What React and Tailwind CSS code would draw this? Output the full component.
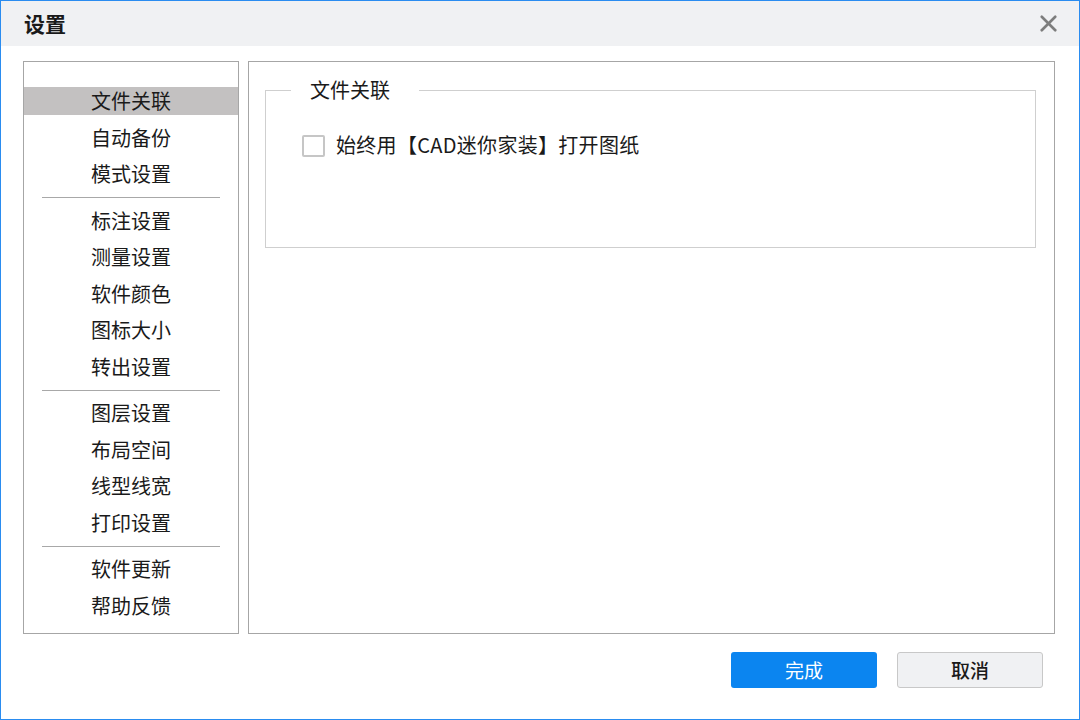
import { X } from 'lucide-react'

const groups = [
    ['文件关联', '自动备份', '模式设置'],
    ['标注设置', '测量设置', '软件颜色', '图标大小', '转出设置'],
    ['图层设置', '布局空间', '线型线宽', '打印设置'],
    ['软件更新', '帮助反馈'],
]

export default function App() {
    const selected = '文件关联'

    return (
        <div
            className="w-[1080px] h-[720px] bg-white border border-[#2a8cf0] flex flex-col text-[#1a1a1a]"
            style={{ fontFamily: '"Noto Sans CJK SC", "Noto Sans", sans-serif' }}
        >
            {/* Title bar */}
            <div className="h-[45px] bg-[#f0f1f3] flex items-center justify-between pl-[23px] pr-[17px] shrink-0">
                <span className="text-[21px] font-bold leading-none">设置</span>
                <X className="w-[27px] h-[27px] text-[#7d7d7d]" strokeWidth={2.4} />
            </div>

            {/* Body */}
            <div className="flex gap-[9px] pl-[22px] pt-[15px]">
                {/* Side menu */}
                <div className="w-[216px] h-[573px] border border-[#a6a6a6] pt-[21px]">
                    {groups.map((group, gi) => (
                        <div key={gi}>
                            {gi > 0 && (
                                <div className="h-[10px] flex items-center px-[18px]">
                                    <div className="h-px w-full bg-[#a8a8a8]" />
                                </div>
                            )}
                            {group.map(item => (
                                <div key={item} className="h-[36.5px] flex items-center">
                                    <div
                                        className={`w-full h-[28px] flex items-center justify-center text-[20px] leading-none ${
                                            item === selected ? 'bg-[#c3c1c1]' : ''
                                        }`}
                                    >
                                        {item}
                                    </div>
                                </div>
                            ))}
                        </div>
                    ))}
                </div>

                {/* Content */}
                <div className="w-[807px] h-[573px] border border-[#a6a6a6] pt-[15px] pl-[16px]">
                    <fieldset className="w-[771px] h-[171px] border border-[#cfcfcf]">
                        <legend className="ml-[25px] pl-[19px] pr-[29px] text-[20px] leading-[26px]">文件关联</legend>
                        <label className="flex items-center gap-[11px] mt-[32px] pl-[36px]">
                            <span className="w-[23px] h-[22px] rounded-[2px] border-2 border-[#c6c6c6] bg-white" />
                            <span className="text-[20px] leading-none pb-[2px] tracking-[0.3px]">始终用【CAD迷你家装】打开图纸</span>
                        </label>
                    </fieldset>
                </div>
            </div>

            {/* Footer buttons */}
            <div className="flex justify-end gap-[20px] pr-[36px] mt-[18px]">
                <button className="w-[146px] h-[36px] rounded-[3px] bg-[#0b85f0] text-white text-[19px]">
                    完成
                </button>
                <button className="w-[146px] h-[36px] rounded-[3px] bg-[#f0f1f3] border border-[#c8c8c8] text-[#1a1a1a] text-[19px] font-medium">
                    取消
                </button>
            </div>
        </div>
    )
}
